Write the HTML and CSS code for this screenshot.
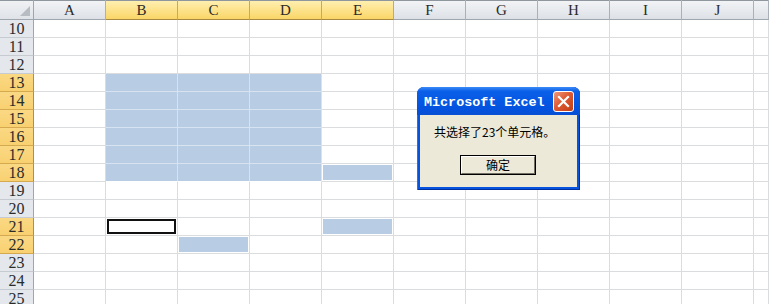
FILE: index.html
```html
<!DOCTYPE html>
<html>
<head>
<meta charset="utf-8">
<link rel="stylesheet" href="styles.css">
</head>
<body>
<div class="sheet">
  <div class="corner"><span class="tri"></span></div>
  <div class="ch">A</div><div class="ch on">B</div><div class="ch on">C</div><div class="ch on">D</div><div class="ch on">E</div><div class="ch">F</div><div class="ch">G</div><div class="ch">H</div><div class="ch">I</div><div class="ch">J</div><div class="ch"></div>

  <div class="rh">10</div><div class="c"></div><div class="c"></div><div class="c"></div><div class="c"></div><div class="c"></div><div class="c"></div><div class="c"></div><div class="c"></div><div class="c"></div><div class="c"></div><div class="c"></div>
  <div class="rh">11</div><div class="c"></div><div class="c"></div><div class="c"></div><div class="c"></div><div class="c"></div><div class="c"></div><div class="c"></div><div class="c"></div><div class="c"></div><div class="c"></div><div class="c"></div>
  <div class="rh">12</div><div class="c"></div><div class="c"></div><div class="c"></div><div class="c"></div><div class="c"></div><div class="c"></div><div class="c"></div><div class="c"></div><div class="c"></div><div class="c"></div><div class="c"></div>
  <div class="rh on">13</div><div class="c"></div><div class="c r"></div><div class="c r"></div><div class="c r"></div><div class="c"></div><div class="c"></div><div class="c"></div><div class="c"></div><div class="c"></div><div class="c"></div><div class="c"></div>
  <div class="rh on">14</div><div class="c"></div><div class="c r"></div><div class="c r"></div><div class="c r"></div><div class="c"></div><div class="c"></div><div class="c"></div><div class="c"></div><div class="c"></div><div class="c"></div><div class="c"></div>
  <div class="rh on">15</div><div class="c"></div><div class="c r"></div><div class="c r"></div><div class="c r"></div><div class="c"></div><div class="c"></div><div class="c"></div><div class="c"></div><div class="c"></div><div class="c"></div><div class="c"></div>
  <div class="rh on">16</div><div class="c"></div><div class="c r"></div><div class="c r"></div><div class="c r"></div><div class="c"></div><div class="c"></div><div class="c"></div><div class="c"></div><div class="c"></div><div class="c"></div><div class="c"></div>
  <div class="rh on">17</div><div class="c"></div><div class="c r"></div><div class="c r"></div><div class="c r"></div><div class="c"></div><div class="c"></div><div class="c"></div><div class="c"></div><div class="c"></div><div class="c"></div><div class="c"></div>
  <div class="rh on">18</div><div class="c"></div><div class="c r rb"></div><div class="c r rb"></div><div class="c r rb"></div><div class="c s"></div><div class="c"></div><div class="c"></div><div class="c"></div><div class="c"></div><div class="c"></div><div class="c"></div>
  <div class="rh">19</div><div class="c"></div><div class="c"></div><div class="c"></div><div class="c"></div><div class="c"></div><div class="c"></div><div class="c"></div><div class="c"></div><div class="c"></div><div class="c"></div><div class="c"></div>
  <div class="rh">20</div><div class="c"></div><div class="c"></div><div class="c"></div><div class="c"></div><div class="c"></div><div class="c"></div><div class="c"></div><div class="c"></div><div class="c"></div><div class="c"></div><div class="c"></div>
  <div class="rh on">21</div><div class="c"></div><div class="c a"><span class="box"></span></div><div class="c"></div><div class="c"></div><div class="c s"></div><div class="c"></div><div class="c"></div><div class="c"></div><div class="c"></div><div class="c"></div><div class="c"></div>
  <div class="rh on">22</div><div class="c"></div><div class="c"></div><div class="c s"></div><div class="c"></div><div class="c"></div><div class="c"></div><div class="c"></div><div class="c"></div><div class="c"></div><div class="c"></div><div class="c"></div>
  <div class="rh">23</div><div class="c"></div><div class="c"></div><div class="c"></div><div class="c"></div><div class="c"></div><div class="c"></div><div class="c"></div><div class="c"></div><div class="c"></div><div class="c"></div><div class="c"></div>
  <div class="rh">24</div><div class="c"></div><div class="c"></div><div class="c"></div><div class="c"></div><div class="c"></div><div class="c"></div><div class="c"></div><div class="c"></div><div class="c"></div><div class="c"></div><div class="c"></div>
  <div class="rh">25</div><div class="c"></div><div class="c"></div><div class="c"></div><div class="c"></div><div class="c"></div><div class="c"></div><div class="c"></div><div class="c"></div><div class="c"></div><div class="c"></div><div class="c"></div>
</div>

<div class="dlg">
  <div class="tb">
    <span class="tt">Microsoft Excel</span>
    <span class="x"><svg width="13" height="13" viewBox="0 0 13 13"><path d="M2 2 L11 11 M11 2 L2 11" stroke="#fff" stroke-width="2.2" stroke-linecap="square"/></svg></span>
  </div>
  <div class="dbody">
    <p class="msg">共选择了23个单元格。</p>
    <div class="btn"><span class="btnin">确定</span></div>
  </div>
</div>
</body>
</html>
```

FILE: styles.css
```css
* { box-sizing: border-box; margin: 0; padding: 0; }
html, body { width: 769px; height: 304px; overflow: hidden; background: #fff; }
body { position: relative; }

.sheet {
  display: grid;
  grid-template-columns: 34px repeat(10, 72px) 15px;
  grid-template-rows: 20px;
  grid-auto-rows: 18px;
  height: 304px;
  overflow: hidden;
}

.c {
  border-right: 1px solid #dadcdd;
  border-bottom: 1px solid #dadcdd;
}

.corner {
  background: linear-gradient(#f1f2f4, #dfe3e8);
  border-right: 1px solid #9ea6b0;
  border-bottom: 1px solid #9ea6b0;
  box-shadow: inset 0 1px 0 #8f969e;
  display: flex;
  align-items: flex-end;
  justify-content: flex-end;
  padding: 0 3px 3px 0;
}
.tri {
  width: 0; height: 0;
  border-left: 10px solid transparent;
  border-bottom: 10px solid #b7bcc3;
}

.ch {
  background: linear-gradient(#f3f4f6, #dde1e7);
  border-right: 1px solid #a9b0b9;
  border-bottom: 1px solid #9ea6b0;
  box-shadow: inset 0 1px 0 #8f969e;
  font-family: "Liberation Serif", serif;
  font-size: 15px;
  line-height: 20px;
  text-align: center;
  color: #2b2b2b;
}
.ch.on {
  background: linear-gradient(#fff0b4, #fde38d 50%, #f9d668);
  border-right: 1px solid #c9a95a;
  border-bottom: 1px solid #a8893e;
}

.rh {
  background: #e4e7ec;
  border-right: 1px solid #9ea6b0;
  border-bottom: 1px solid #c6cbd2;
  font-family: "Liberation Serif", serif;
  font-size: 16px;
  line-height: 18px;
  text-align: center;
  color: #2b2b2b;
}
.rh.on {
  background: linear-gradient(#fad984, #f8d070);
  border-right: 1px solid #b58f3e;
  border-bottom: 1px solid #d5a94f;
}

.c.r {
  background: #b8cce4;
  border-right-color: #d8e3f1;
  border-bottom-color: #d8e3f1;
}
.c.r.rb { border-bottom-color: #ffffff; }

.c.s {
  background: #b8cce4;
  background-clip: content-box;
  padding: 1px;
}

.c.a { padding: 1px 0 0 1px; display: flex; }
.box {
  flex: 1;
  margin: 0 1px 1px 0;
  border: 2px solid #111;
}

/* dialog */
.dlg {
  position: absolute;
  left: 417px;
  top: 87px;
  width: 163px;
  height: 103px;
  background: #0653e0;
  border-radius: 7px 7px 0 0;
  padding: 0 3px 3px;
  display: flex;
  flex-direction: column;
  box-shadow: inset 1px 0 0 #2a6ff0, inset -1px 0 0 #00309c, inset 0 -1px 0 #00309c;
}
.tb {
  height: 28px;
  margin: 0 -3px;
  padding: 0 6px 0 7px;
  border-radius: 7px 7px 0 0;
  background: linear-gradient(#3d8bf7, #0a5fe8 15%, #0558e4 50%, #0451dc 85%, #0a4fd2);
  display: flex;
  align-items: center;
  justify-content: space-between;
}
.tt {
  font-family: "Liberation Mono", monospace;
  font-weight: bold;
  font-size: 13.4px;
  color: #fff;
  padding-top: 2px;
}
.x {
  width: 21px;
  height: 21px;
  border: 1px solid #fff;
  border-radius: 3px;
  background: linear-gradient(135deg, #f09a7c, #dd5a34 45%, #c43d14);
  display: flex;
  align-items: center;
  justify-content: center;
}
.dbody {
  flex: 1;
  background: #ece9d8;
  display: flex;
  flex-direction: column;
  padding: 9px 0 0 14px;
}
.msg {
  font-family: "Noto Sans CJK SC", sans-serif;
  font-size: 12px;
  line-height: 16px;
  color: #000;
}
.btn {
  margin: 15px 0 0 26px;
  width: 76px;
  height: 20px;
  border: 1px solid #000;
  background: #ece9d8;
  display: flex;
}
.btnin {
  flex: 1;
  border-top: 1px solid #fff;
  border-left: 1px solid #fff;
  border-right: 1px solid #716f64;
  border-bottom: 1px solid #716f64;
  font-family: "Noto Sans CJK SC", sans-serif;
  font-size: 12px;
  line-height: 16px;
  text-align: center;
  color: #000;
}
```
